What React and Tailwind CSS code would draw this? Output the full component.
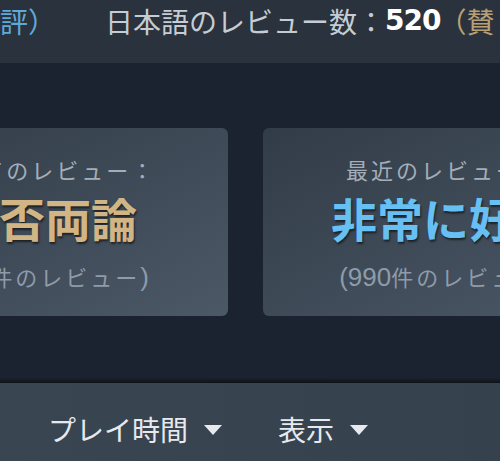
const jp = '"Noto Sans CJK JP", "Noto Sans", sans-serif'
const latin = '"Liberation Sans", sans-serif'

const ReviewCard = ({ label, verdict, count, tone }) => (
    <div className="shrink-0 w-[366px] h-[188px] rounded-[6px] bg-gradient-to-br from-[#323c48] to-[#4b5866] flex flex-col items-center pt-[25px]">
        <p className="text-[22px] leading-[32px] tracking-[3px] text-[#a4aeb9] whitespace-nowrap">{label}</p>
        <p
            className={`text-[46px] leading-[52px] font-bold mt-[6px] whitespace-nowrap [text-shadow:1px_2px_2px_rgba(0,0,0,0.55)] ${tone === 'mixed' ? 'text-[#d2b585]' : 'text-[#66c0f4]'}`}
        >
            {verdict}
        </p>
        <p className="text-[22px] leading-[34px] tracking-[3px] text-[#8e9baa] mt-[16px] whitespace-nowrap">
            <span className="text-[26px] tracking-[0px]" style={{ fontFamily: latin }}>({count}</span>
            件のレビュー
            <span className="text-[26px]" style={{ fontFamily: latin }}>)</span>
        </p>
    </div>
)

const Filter = ({ label }) => (
    <button type="button" className="flex items-center gap-[16px] text-[28px] leading-[34px] text-[#e6eaee]">
        {label}
        <svg width="18" height="10" viewBox="0 0 18 10" className="mt-[2px]">
            <path d="M0 0 H18 L9 10 Z" fill="#e6eaee" />
        </svg>
    </button>
)

export default function App() {
    return (
        <div className="w-[500px] h-[461px] overflow-hidden bg-[#1b2330] flex flex-col" style={{ fontFamily: jp }}>
            <div className="h-[63px] shrink-0 bg-[#29323d] flex items-start pt-[7px] whitespace-nowrap text-[28px] leading-[28px]">
                <span className="text-[#5fa8da] w-[105px] shrink-0">評）</span>
                <span className="text-[#c6ccd3]">日本語のレビュー数：</span>
                <span className="text-white font-bold tracking-[-1px]" style={{ fontFamily: '"DejaVu Sans", sans-serif' }}>520</span>
                <span className="text-[#b9a074] ml-[-2px]">（賛</span>
            </div>

            <div className="flex-1 pt-[65px] flex gap-[35px] ml-[-138px]">
                <ReviewCard label="すべてのレビュー：" verdict="賛否両論" count="870" tone="mixed" />
                <ReviewCard label="最近のレビュー：" verdict="非常に好評" count="990" tone="positive" />
            </div>

            <div className="h-[5px] shrink-0 bg-gradient-to-b from-[#1a222c] to-[#0e1319]" />
            <div className="h-[78px] shrink-0 bg-gradient-to-r from-[#3a4552] to-[#36414e] flex items-center gap-[56px] pl-[48px] pt-[14px]">
                <Filter label="プレイ時間" />
                <Filter label="表示" />
            </div>
        </div>
    )
}
